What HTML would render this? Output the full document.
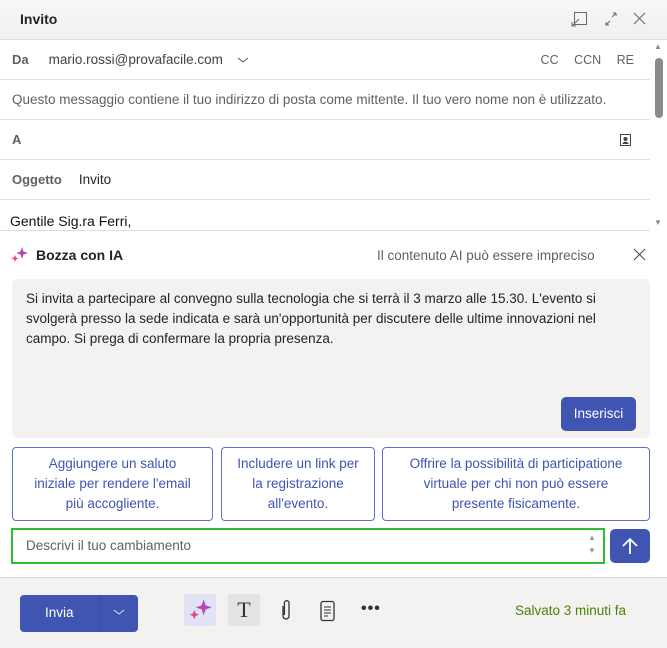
<!DOCTYPE html>
<html><head><meta charset="utf-8"><style>
*{box-sizing:border-box;margin:0;padding:0}
body{width:667px;height:648px;overflow:hidden;font-family:"Liberation Sans",sans-serif;font-size:13.5px;color:#242424;background:#fff;position:relative}
.abs{position:absolute}
.hdr{left:0;top:0;width:667px;height:40px;background:linear-gradient(#f7f7f7,#f0f0f0);border-bottom:1px solid #ddd}
.row{left:0;width:650px;height:40px;border-bottom:1px solid #e1e1e1;display:flex;align-items:center;padding-left:12px}
.lbl{font-weight:bold;color:#616161;font-size:13px}
.gray{color:#616161}
.chip{position:absolute;top:447px;height:74px;border:1px solid #5b6fc7;border-radius:4px;color:#4054b2;text-align:center;display:flex;align-items:center;justify-content:center;line-height:20px;font-size:13.5px}
</style></head><body>
<div class="abs hdr"></div>
<div class="abs" style="left:20px;top:11px;font-weight:bold;font-size:14px">Invito</div>
<svg class="abs" style="left:570px;top:10px" width="80" height="18" viewBox="0 0 80 18" fill="none" stroke="#666" stroke-width="1">
<rect x="4.5" y="2.5" width="12" height="12"/><path d="M2 16l7-7M2 16v-4M2 16h4"/>
<path d="M36 15l4-4M36 15v-3M36 15h3M46 3l-4 4M46 3v3M46 3h-3"/>
<path d="M64 3l11 11M75 3L64 14"/></svg>
<div class="abs row" style="top:40px"><span class="lbl">Da</span><span style="margin-left:20px;color:#424242">mario.rossi@provafacile.com</span>
<svg style="margin-left:14px" width="12" height="8"><path d="M1 2l5 4 5-4" stroke="#555" fill="none"/></svg>
<span class="gray" style="margin-left:auto;font-size:12.5px;word-spacing:12px;padding-right:16px">CC CCN RE</span></div>
<div class="abs row gray" style="top:80px;font-size:13.5px">Questo messaggio contiene il tuo indirizzo di posta come mittente. Il tuo vero nome non è utilizzato.</div>
<div class="abs row" style="top:120px"><span class="lbl">A</span>
<svg style="margin-left:auto;margin-right:18px" width="13" height="14"><rect x="1.5" y="1.5" width="10" height="11" fill="none" stroke="#444"/><circle cx="6.5" cy="6" r="2" fill="#444"/><path d="M3.5 11c0-3 6-3 6 0z" fill="#444"/></svg></div>
<div class="abs row" style="top:160px"><span class="lbl">Oggetto</span><span style="margin-left:17px">Invito</span></div>
<div class="abs" style="left:10px;top:213px;font-size:14px;color:#111;height:17px;overflow:hidden;width:640px">Gentile Sig.ra Ferri,</div>
<div class="abs" style="left:0;top:230px;width:650px;border-top:1px solid #ddd"></div>
<div class="abs" style="left:652px;top:40px;width:15px;height:190px;background:#fff"></div>
<div class="abs" style="left:655px;top:58px;width:8px;height:60px;background:#8a8a8a;border-radius:4px"></div>
<div class="abs" style="left:654px;top:42px;font-size:8px;color:#888">▲</div>
<div class="abs" style="left:654px;top:218px;font-size:8px;color:#888">▼</div>
<svg class="abs" style="left:11px;top:246px" width="18" height="18" viewBox="0 0 18 18"><defs><linearGradient id="g" x1="0" y1="1" x2="1" y2="0"><stop offset="0" stop-color="#e8447a"/><stop offset="1" stop-color="#7b4df5"/></linearGradient></defs>
<path d="M11 1l1.5 4.5L17 7l-4.5 1.5L11 13l-1.5-4.5L5 7l4.5-1.5z" fill="url(#g)"/><path d="M4 9l1 2.5 2.5 1-2.5 1L4 16l-1-2.5L.5 12.5l2.5-1z" fill="#e8447a"/></svg>
<div class="abs" style="left:36px;top:247px;font-weight:bold;font-size:14px">Bozza con IA</div>
<div class="abs gray" style="left:377px;top:248px;font-size:13.5px">Il contenuto AI può essere impreciso</div>
<svg class="abs" style="left:633px;top:248px" width="13" height="13"><path d="M1 1l11 11M12 1L1 12" stroke="#444"/></svg>
<div class="abs" style="left:12px;top:279px;width:638px;height:159px;background:#f3f2f1;border-radius:6px;padding:10px 14px;line-height:20px;font-size:13.5px">Si invita a partecipare al convegno sulla tecnologia che si terrà il 3 marzo alle 15.30. L'evento si svolgerà presso la sede indicata e sarà un'opportunità per discutere delle ultime innovazioni nel campo. Si prega di confermare la propria presenza.</div>
<div class="abs" style="left:561px;top:397px;width:75px;height:34px;background:#4054b2;border-radius:5px;color:#fff;text-align:center;line-height:34px;font-size:13.5px">Inserisci</div>
<div class="chip" style="left:12px;width:201px">Aggiungere un saluto<br>iniziale per rendere l'email<br>più accogliente.</div>
<div class="chip" style="left:221px;width:154px">Includere un link per<br>la registrazione<br>all'evento.</div>
<div class="chip" style="left:382px;width:268px">Offrire la possibilità di participatione<br>virtuale per chi non può essere<br>presente fisicamente.</div>
<div class="abs" style="left:11px;top:528px;width:594px;height:36px;border:2px solid #2ebd2e;padding-left:13px;line-height:32px;color:#616161">Descrivi il tuo cambiamento</div>
<div class="abs" style="left:588px;top:531px;font-size:8px;color:#999;line-height:13px">▲<br>▼</div>
<div class="abs" style="left:610px;top:529px;width:40px;height:34px;background:#4054b2;border-radius:5px"></div>
<svg class="abs" style="left:620px;top:536px" width="20" height="20"><path d="M10 18V3M3 10l7-7 7 7" stroke="#fff" stroke-width="1.8" fill="none"/></svg>
<div class="abs" style="left:0;top:577px;width:667px;height:71px;background:#f3f2f1;border-top:1px solid #d6d6d6"></div>
<div class="abs" style="left:20px;top:595px;width:118px;height:37px;background:#4054b2;border-radius:4px"></div>
<div class="abs" style="left:100px;top:595px;width:1px;height:37px;background:#3a4ca0"></div>
<div class="abs" style="left:45px;top:605px;color:#fff;font-size:13.5px">Invia</div>
<svg class="abs" style="left:113px;top:608px" width="12" height="8"><path d="M1 2l5 4 5-4" stroke="#dde" fill="none"/></svg>
<div class="abs" style="left:184px;top:594px;width:32px;height:32px;background:#e1e3f5;border-radius:3px"></div>
<svg class="abs" style="left:189px;top:598px" width="24" height="24" viewBox="0 0 18 18"><defs><linearGradient id="g2" x1="0" y1="1" x2="1" y2="0"><stop offset="0" stop-color="#e8447a"/><stop offset="1" stop-color="#7b4df5"/></linearGradient></defs>
<path d="M11 1l1.5 4.5L17 7l-4.5 1.5L11 13l-1.5-4.5L5 7l4.5-1.5z" fill="url(#g2)"/><path d="M4 9l1 2.5 2.5 1-2.5 1L4 16l-1-2.5L.5 12.5l2.5-1z" fill="#e8447a"/></svg>
<div class="abs" style="left:228px;top:594px;width:32px;height:32px;background:#e4e4e4;border-radius:3px;text-align:center;font-family:'Liberation Serif',serif;font-size:22px;line-height:32px;color:#333">T</div>
<svg class="abs" style="left:279px;top:599px" width="14" height="24"><path d="M4 7v10a3 3 0 006 0V4a2.3 2.3 0 00-4.6 0v12" stroke="#333" stroke-width="1.3" fill="none"/></svg>
<svg class="abs" style="left:319px;top:600px" width="18" height="22"><rect x="2" y="1.5" width="13" height="19" rx="2" fill="none" stroke="#333" stroke-width="1.3"/><path d="M5 7h7M5 10h7M5 13h7M5 16h4" stroke="#333"/></svg>
<div class="abs" style="left:361px;top:600px;font-size:16px;font-weight:bold;color:#333;letter-spacing:1px">•••</div>
<div class="abs" style="left:515px;top:603px;color:#498205;font-size:13.5px">Salvato 3 minuti fa</div>
</body></html>
